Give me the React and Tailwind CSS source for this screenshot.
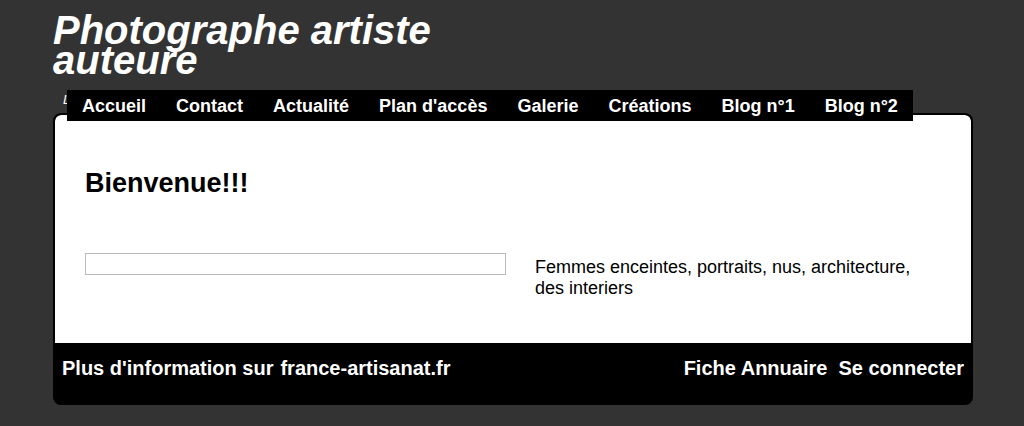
const navItems = ['Accueil', 'Contact', 'Actualité', "Plan d'accès", 'Galerie', 'Créations', 'Blog n°1', 'Blog n°2'];

const App = () => {
  return (
    <div className="min-h-screen w-full bg-[#333333] font-['Liberation_Sans',Arial,sans-serif] text-white">
      <div className="ml-[53px] w-[920px] pt-[15px]">
        <h1 className="text-[40px] font-bold italic leading-[30px] text-white">
          Photographe artiste
          <br />
          auteure
        </h1>

        <div className="relative mt-[15px] flex pl-[14px]">
          <span className="absolute left-[10px] top-[3px] text-[13px] italic leading-none text-white">L</span>
          <nav className="relative z-10 flex h-[31px] items-start bg-black pt-[2px]">
            {navItems.map((item) => (
              <a key={item} href="#" className="px-[15px] text-[18px] font-bold leading-[29px] text-white">
                {item}
              </a>
            ))}
          </nav>
        </div>

        <div className="-mt-[8px] overflow-hidden rounded-[8px] border-2 border-black bg-black">
          <div className="h-[228px] rounded-t-[6px] bg-white px-[30px] pt-[52px] text-black">
            <h2 className="text-[27px] font-bold leading-[32px]">Bienvenue!!!</h2>
            <div className="mt-[54px] flex items-start">
              <div className="h-[22px] w-[421px] border border-[#bbbbbb]" />
              <p className="ml-[29px] mt-[4px] w-[405px] text-[18px] leading-[21px]">
                Femmes enceintes, portraits, nus, architecture, des interiers
              </p>
            </div>
          </div>
          <div className="flex h-[60px] items-start justify-between px-[7px] pt-[13px] text-[20px] font-bold leading-[24px]">
            <div className="flex gap-[7px]">
              <span>Plus d'information sur</span>
              <a href="#">france-artisanat.fr</a>
            </div>
            <div className="flex gap-[11px]">
              <a href="#">Fiche Annuaire</a>
              <a href="#">Se connecter</a>
            </div>
          </div>
        </div>
      </div>
    </div>
  );
};

export default App;
